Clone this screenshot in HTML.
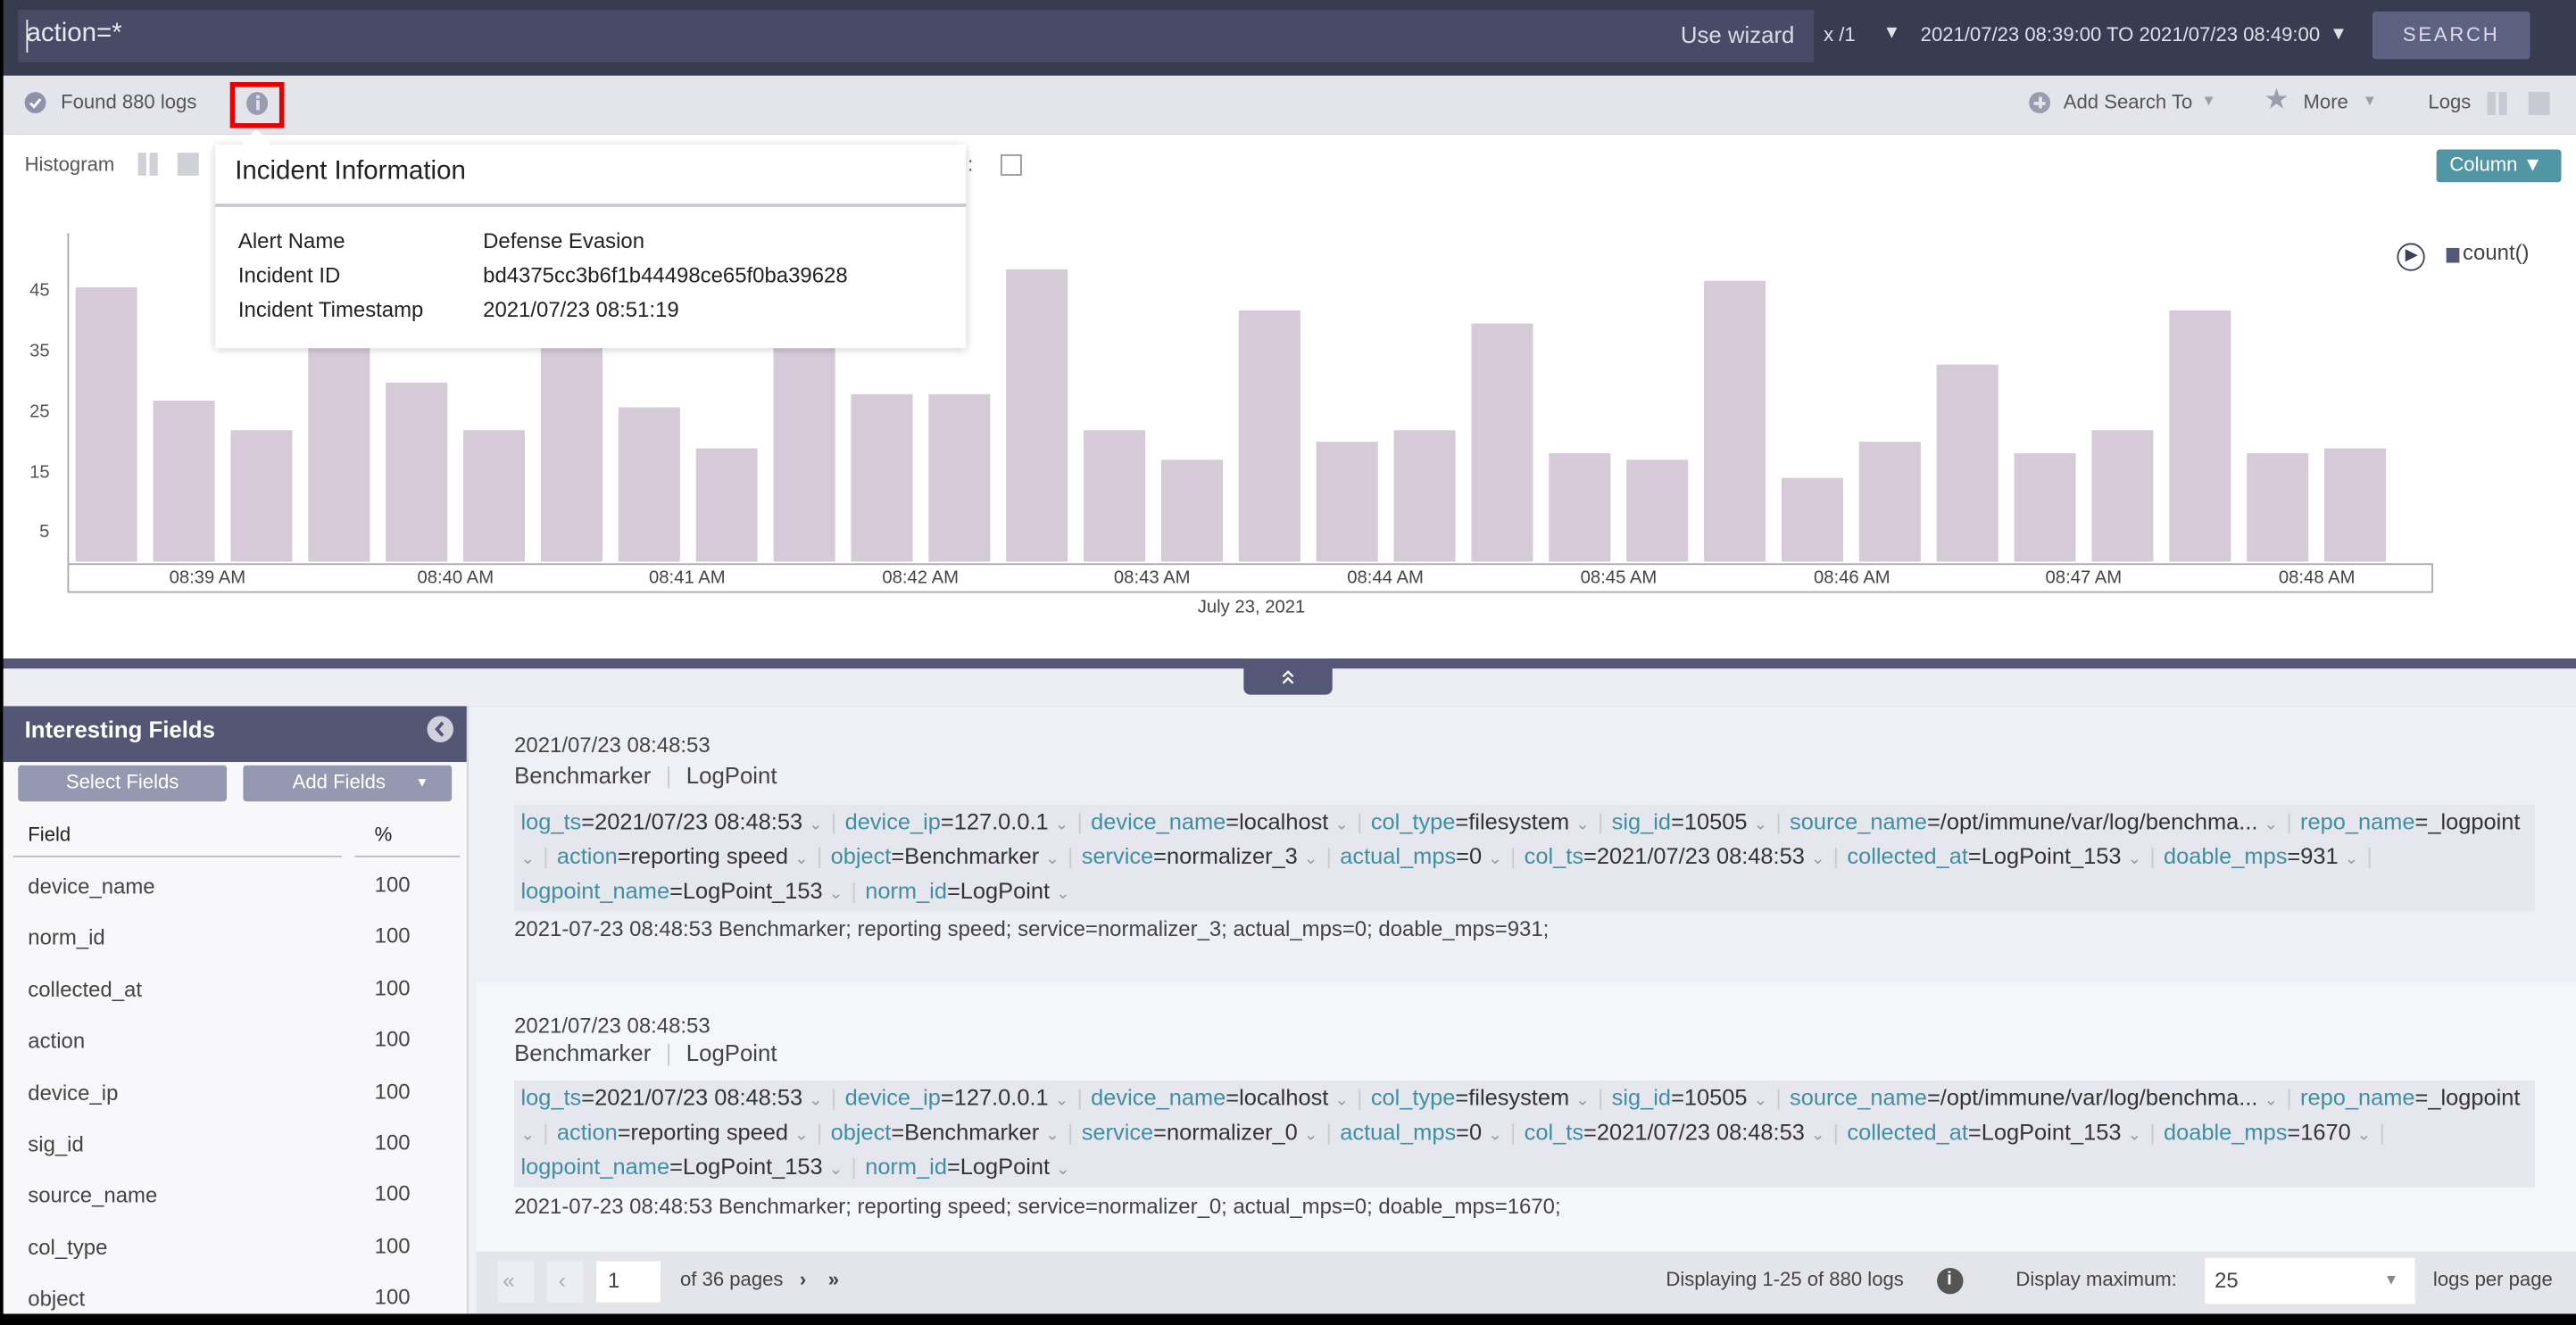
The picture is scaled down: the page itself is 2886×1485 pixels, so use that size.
<!DOCTYPE html>
<html><head><meta charset="utf-8"><style>
*{box-sizing:border-box;margin:0;padding:0}
html,body{width:2886px;height:1478px;overflow:hidden;background:#000}
#w{position:absolute;left:0;top:0;width:1568px;height:803px;transform:scale(1.8406);transform-origin:0 0;font-family:"Liberation Sans",sans-serif;color:#444;background:#000}
.a{position:absolute}
.t{position:absolute;white-space:nowrap}
.k{color:#3f8fa0}
.sep{color:#ccc;margin:0 5px}
.dd{color:#999;font-size:10px;line-height:0}
.tags{position:absolute;left:313px;width:1230px;background:#e6e7ee;font-size:13.8px;line-height:21px;padding:0 4px;color:#333;white-space:nowrap;overflow:hidden}
</style></head><body><div id="w">
<div class="a" style="left:2px;top:0;width:1566px;height:46px;background:#383c50"></div>
<div class="a" style="left:11px;top:6px;width:1093px;height:32px;background:#474b66"></div>
<div class="t" style="left:16px;top:12px;font-size:16px;color:#e8e8f0">action=*</div>
<div class="a" style="left:16px;top:12px;width:1px;height:20px;background:#eee"></div>
<div class="t" style="left:1023px;top:13px;font-size:14px;color:#dcdce6">Use wizard</div>
<div class="t" style="left:1110px;top:14px;font-size:12px;color:#e0e0ea">x /1</div>
<div class="t" style="left:1146px;top:14px;font-size:11px;color:#e0e0ea">▼</div>
<div class="t" style="left:1169px;top:14px;font-size:12px;color:#e0e0ea">2021/07/23 08:39:00 TO 2021/07/23 08:49:00</div>
<div class="t" style="left:1418px;top:15px;font-size:11px;color:#e0e0ea">▼</div>
<div class="a" style="left:1444px;top:7px;width:96px;height:29px;background:#5d6282;border-radius:2px"></div>
<div class="t" style="left:1444px;top:14px;width:96px;text-align:center;font-size:12px;letter-spacing:1.5px;color:#dcdce8">SEARCH</div>
<div class="a" style="left:2px;top:46px;width:1566px;height:36px;background:#e4e5ea"></div>
<div class="a" style="left:15px;top:56px;width:13px;height:13px;border-radius:50%;background:#8e92aa"></div>
<svg class="a" style="left:15px;top:56px" width="13" height="13"><path d="M3.5 6.8 L5.7 9 L9.6 4.4" stroke="#fff" stroke-width="1.6" fill="none"/></svg>
<div class="t" style="left:37px;top:55px;font-size:12px;color:#555">Found 880 logs</div>
<div class="a" style="left:140px;top:50px;width:33px;height:28px;border:3px solid #e60000"></div>
<div class="a" style="left:150px;top:56px;width:13px;height:14px;border-radius:50%;background:#9a9daf"></div>
<div class="a" style="left:155.5px;top:58px;width:2px;height:2px;background:#e4e5ea"></div>
<div class="a" style="left:155.5px;top:61px;width:2px;height:6px;background:#e4e5ea"></div>
<div class="a" style="left:1235px;top:56px;width:13px;height:13px;border-radius:50%;background:#9a9daf"></div>
<div class="a" style="left:1238px;top:61.5px;width:7px;height:2px;background:#e4e5ea"></div>
<div class="a" style="left:1240.5px;top:59px;width:2px;height:7px;background:#e4e5ea"></div>
<div class="t" style="left:1256px;top:55px;font-size:12px;color:#555">Add Search To</div>
<div class="t" style="left:1340px;top:56px;font-size:9px;color:#9a9daf">▼</div>
<div class="t" style="left:1378px;top:51px;font-size:17px;color:#9a9daf">★</div>
<div class="t" style="left:1402px;top:55px;font-size:12px;color:#555">More</div>
<div class="t" style="left:1438px;top:56px;font-size:9px;color:#9a9daf">▼</div>
<div class="t" style="left:1478px;top:55px;font-size:12px;color:#555">Logs</div>
<div class="a" style="left:1514px;top:56px;width:5px;height:14px;background:#c8c9d2"></div>
<div class="a" style="left:1521px;top:56px;width:5px;height:14px;background:#c8c9d2"></div>
<div class="a" style="left:1539px;top:56px;width:13px;height:14px;background:#c8c9d2"></div>
<div class="a" style="left:2px;top:82px;width:1566px;height:319px;background:#fff"></div>
<div class="t" style="left:15px;top:93px;font-size:12px;color:#555">Histogram</div>
<div class="a" style="left:84px;top:93px;width:5px;height:14px;background:#d0d1d8"></div>
<div class="a" style="left:91px;top:93px;width:5px;height:14px;background:#d0d1d8"></div>
<div class="a" style="left:108px;top:93px;width:13px;height:14px;background:#d0d1d8"></div>
<div class="t" style="left:589px;top:93px;font-size:12px;color:#555">:</div>
<div class="a" style="left:609px;top:94px;width:13px;height:13px;border:1px solid #999;background:#fff"></div>
<div class="a" style="left:1483px;top:91px;width:76px;height:20px;background:#5296a5;border-radius:2px"></div>
<div class="t" style="left:1491px;top:93px;font-size:12px;color:#fff">Column ▼</div>
<div class="a" style="left:1459px;top:148px;width:17px;height:17px;border:1.5px solid #3c3f55;border-radius:50%"></div>
<div class="t" style="left:1464px;top:150px;font-size:10px;color:#3c3f55">▶</div>
<div class="a" style="left:1489px;top:151px;width:8px;height:9px;background:#545876"></div>
<div class="t" style="left:1499px;top:146px;font-size:13px;color:#444">count()</div>
<div class="a" style="left:41px;top:142px;width:1px;height:201px;background:#aaa"></div>
<div class="t" style="left:18px;top:171px;font-size:11px;color:#555">45</div>
<div class="t" style="left:18px;top:208px;font-size:11px;color:#555">35</div>
<div class="t" style="left:18px;top:245px;font-size:11px;color:#555">25</div>
<div class="t" style="left:18px;top:282px;font-size:11px;color:#555">15</div>
<div class="t" style="left:24px;top:318px;font-size:11px;color:#555">5</div>
<svg class="a" style="left:0;top:0" width="1568" height="400">
<g fill="#d6cad9" id="bars"></g>
</svg>
<div class="a" style="left:41px;top:343px;width:1440px;height:18px;border:1px solid #aaa;background:#fff"></div>
<div class="t" style="left:103px;top:346px;font-size:11px;color:#444">08:39 AM</div>
<div class="t" style="left:254px;top:346px;font-size:11px;color:#444">08:40 AM</div>
<div class="t" style="left:395px;top:346px;font-size:11px;color:#444">08:41 AM</div>
<div class="t" style="left:537px;top:346px;font-size:11px;color:#444">08:42 AM</div>
<div class="t" style="left:678px;top:346px;font-size:11px;color:#444">08:43 AM</div>
<div class="t" style="left:820px;top:346px;font-size:11px;color:#444">08:44 AM</div>
<div class="t" style="left:962px;top:346px;font-size:11px;color:#444">08:45 AM</div>
<div class="t" style="left:1104px;top:346px;font-size:11px;color:#444">08:46 AM</div>
<div class="t" style="left:1245px;top:346px;font-size:11px;color:#444">08:47 AM</div>
<div class="t" style="left:1387px;top:346px;font-size:11px;color:#444">08:48 AM</div>
<div class="t" style="left:729px;top:364px;font-size:11px;color:#444">July 23, 2021</div>
<div class="a" style="left:131px;top:88px;width:457px;height:124px;background:#fff;box-shadow:0 1px 5px rgba(0,0,0,.2)"></div>
<div class="a" style="left:150px;top:81px;width:12px;height:12px;background:#fff;transform:rotate(45deg)"></div>
<div class="t" style="left:143px;top:96px;font-size:16px;color:#222">Incident Information</div>
<div class="a" style="left:131px;top:124px;width:457px;height:2px;background:#c8c8d0"></div>
<div class="t" style="left:145px;top:136px;font-size:13px;color:#222;line-height:21px">Alert Name<br>Incident ID<br>Incident Timestamp</div>
<div class="t" style="left:294px;top:136px;font-size:13px;color:#222;line-height:21px">Defense Evasion<br>bd4375cc3b6f1b44498ce65f0ba39628<br>2021/07/23 08:51:19</div>
<div class="a" style="left:2px;top:407px;width:1566px;height:23px;background:#eceef3"></div>
<div class="a" style="left:2px;top:401px;width:1566px;height:6px;background:#545876"></div>
<div class="a" style="left:757px;top:401px;width:54px;height:22px;background:#545876;border-radius:0 0 4px 4px"></div>
<svg class="a" style="left:778px;top:406px" width="12" height="12"><path d="M3 6 L6 3 L9 6 M3 10 L6 7 L9 10" stroke="#fff" stroke-width="1.3" fill="none"/></svg>
<div class="a" style="left:2px;top:430px;width:283px;height:370px;background:#f8f8fb;border-right:1px solid #d8d9e0"></div>
<div class="a" style="left:2px;top:430px;width:282px;height:34px;background:#535774"></div>
<div class="t" style="left:15px;top:436px;font-size:14px;font-weight:bold;color:#fff">Interesting Fields</div>
<div class="a" style="left:260px;top:436px;width:16px;height:16px;border-radius:50%;background:#d0d1dc"></div>
<svg class="a" style="left:260px;top:436px" width="16" height="16"><path d="M9.5 4 L6 8 L9.5 12" stroke="#535774" stroke-width="2" fill="none"/></svg>
<div class="a" style="left:11px;top:466px;width:127px;height:22px;background:#9498b0;border-radius:2px"></div>
<div class="t" style="left:11px;top:469px;width:127px;text-align:center;font-size:12px;color:#fff">Select Fields</div>
<div class="a" style="left:148px;top:466px;width:127px;height:22px;background:#9498b0;border-radius:2px"></div>
<div class="t" style="left:178px;top:469px;font-size:12px;color:#fff">Add Fields</div>
<div class="t" style="left:253px;top:472px;font-size:8px;color:#fff">▼</div>
<div class="t" style="left:17px;top:501px;font-size:12px;color:#222">Field</div>
<div class="t" style="left:228px;top:501px;font-size:12px;color:#222">%</div>
<div class="a" style="left:8px;top:521px;width:200px;height:1px;background:#bbb"></div>
<div class="a" style="left:216px;top:521px;width:64px;height:1px;background:#bbb"></div>
<div class="t" style="left:17px;top:524px;font-size:13px;color:#444;line-height:31.4px">device_name<br>norm_id<br>collected_at<br>action<br>device_ip<br>sig_id<br>source_name<br>col_type<br>object</div>
<div class="t" style="left:228px;top:523px;font-size:13px;color:#444;line-height:31.4px">100<br>100<br>100<br>100<br>100<br>100<br>100<br>100<br>100</div>
<div class="a" style="left:285px;top:430px;width:1283px;height:370px;background:#eff0f6"></div>
<div class="a" style="left:290px;top:598px;width:1278px;height:164px;background:#f5f6fa"></div>
<div class="t" style="left:313px;top:446px;font-size:13px;color:#444">2021/07/23 08:48:53</div>
<div class="t" style="left:313px;top:464px;font-size:14px;color:#444">Benchmarker <span class="sep">|</span> LogPoint</div>
<div class="tags" style="top:490px;height:65px">
<span class="k">log_ts</span>=2021/07/23 08:48:53 <span class="dd">⌄</span><span class="sep">|</span><span class="k">device_ip</span>=127.0.0.1 <span class="dd">⌄</span><span class="sep">|</span><span class="k">device_name</span>=localhost <span class="dd">⌄</span><span class="sep">|</span><span class="k">col_type</span>=filesystem <span class="dd">⌄</span><span class="sep">|</span><span class="k">sig_id</span>=10505 <span class="dd">⌄</span><span class="sep">|</span><span class="k">source_name</span>=/opt/immune/var/log/benchma... <span class="dd">⌄</span><span class="sep">|</span><span class="k">repo_name</span>=_logpoint<br>
<span class="dd">⌄</span><span class="sep">|</span><span class="k">action</span>=reporting speed <span class="dd">⌄</span><span class="sep">|</span><span class="k">object</span>=Benchmarker <span class="dd">⌄</span><span class="sep">|</span><span class="k">service</span>=normalizer_3 <span class="dd">⌄</span><span class="sep">|</span><span class="k">actual_mps</span>=0 <span class="dd">⌄</span><span class="sep">|</span><span class="k">col_ts</span>=2021/07/23 08:48:53 <span class="dd">⌄</span><span class="sep">|</span><span class="k">collected_at</span>=LogPoint_153 <span class="dd">⌄</span><span class="sep">|</span><span class="k">doable_mps</span>=931 <span class="dd">⌄</span><span class="sep">|</span><br>
<span class="k">logpoint_name</span>=LogPoint_153 <span class="dd">⌄</span><span class="sep">|</span><span class="k">norm_id</span>=LogPoint <span class="dd">⌄</span>
</div>
<div class="t" style="left:313px;top:558px;font-size:13px;color:#444">2021-07-23 08:48:53 Benchmarker; reporting speed; service=normalizer_3; actual_mps=0; doable_mps=931;</div>
<div class="t" style="left:313px;top:617px;font-size:13px;color:#444">2021/07/23 08:48:53</div>
<div class="t" style="left:313px;top:633px;font-size:14px;color:#444">Benchmarker <span class="sep">|</span> LogPoint</div>
<div class="tags" style="top:658px;height:65px">
<span class="k">log_ts</span>=2021/07/23 08:48:53 <span class="dd">⌄</span><span class="sep">|</span><span class="k">device_ip</span>=127.0.0.1 <span class="dd">⌄</span><span class="sep">|</span><span class="k">device_name</span>=localhost <span class="dd">⌄</span><span class="sep">|</span><span class="k">col_type</span>=filesystem <span class="dd">⌄</span><span class="sep">|</span><span class="k">sig_id</span>=10505 <span class="dd">⌄</span><span class="sep">|</span><span class="k">source_name</span>=/opt/immune/var/log/benchma... <span class="dd">⌄</span><span class="sep">|</span><span class="k">repo_name</span>=_logpoint<br>
<span class="dd">⌄</span><span class="sep">|</span><span class="k">action</span>=reporting speed <span class="dd">⌄</span><span class="sep">|</span><span class="k">object</span>=Benchmarker <span class="dd">⌄</span><span class="sep">|</span><span class="k">service</span>=normalizer_0 <span class="dd">⌄</span><span class="sep">|</span><span class="k">actual_mps</span>=0 <span class="dd">⌄</span><span class="sep">|</span><span class="k">col_ts</span>=2021/07/23 08:48:53 <span class="dd">⌄</span><span class="sep">|</span><span class="k">collected_at</span>=LogPoint_153 <span class="dd">⌄</span><span class="sep">|</span><span class="k">doable_mps</span>=1670 <span class="dd">⌄</span><span class="sep">|</span><br>
<span class="k">logpoint_name</span>=LogPoint_153 <span class="dd">⌄</span><span class="sep">|</span><span class="k">norm_id</span>=LogPoint <span class="dd">⌄</span>
</div>
<div class="t" style="left:313px;top:727px;font-size:13px;color:#444">2021-07-23 08:48:53 Benchmarker; reporting speed; service=normalizer_0; actual_mps=0; doable_mps=1670;</div>
<div class="a" style="left:290px;top:762px;width:1278px;height:38px;background:#e4e5ea"></div>
<div class="a" style="left:303px;top:768px;width:22px;height:25px;background:#eceef3"></div>
<div class="t" style="left:306px;top:772px;font-size:13px;color:#aaa">«</div>
<div class="a" style="left:333px;top:768px;width:22px;height:25px;background:#eceef3"></div>
<div class="t" style="left:340px;top:772px;font-size:13px;color:#aaa">‹</div>
<div class="a" style="left:363px;top:768px;width:39px;height:25px;background:#fff"></div>
<div class="t" style="left:370px;top:772px;font-size:13px;color:#444">1</div>
<div class="t" style="left:414px;top:772px;font-size:12px;color:#444">of 36 pages &nbsp; <b>›</b> &nbsp;&nbsp; <b>»</b></div>
<div class="t" style="left:1014px;top:772px;font-size:12px;color:#444">Displaying 1-25 of 880 logs</div>
<div class="a" style="left:1179px;top:772px;width:16px;height:16px;border-radius:50%;background:#555"></div>
<div class="t" style="left:1185px;top:773px;font-size:11px;font-weight:bold;color:#fff">i</div>
<div class="t" style="left:1227px;top:772px;font-size:12px;color:#444">Display maximum:</div>
<div class="a" style="left:1342px;top:766px;width:128px;height:28px;background:#fff"></div>
<div class="t" style="left:1348px;top:772px;font-size:13px;color:#444">25</div>
<div class="t" style="left:1451px;top:774px;font-size:9px;color:#888">▼</div>
<div class="t" style="left:1481px;top:772px;font-size:12px;color:#444">logs per page</div>
</div>
<script>
var tops=[175,244,262,200,233,262,200,248,273,200,240,240,164,262,280,189,269,262,197,276,280,171,291,269,222,276,262,189,276,273];
var g=document.getElementById('bars'),s='';
tops.forEach(function(t,i){var x=46+i*47.2;s+='<rect x="'+x.toFixed(1)+'" y="'+t+'" width="37.5" height="'+(342-t)+'"/>';});
g.innerHTML=s;
</script>
</body></html>
